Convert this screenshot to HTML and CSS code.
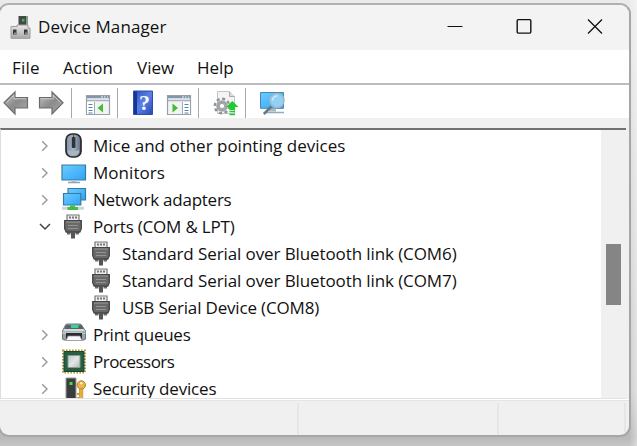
FILE: index.html
```html
<!DOCTYPE html>
<html lang="en">
<head>
<meta charset="utf-8">
<title>Device Manager</title>
<link rel="stylesheet" href="styles.css">
</head>
<body>
<svg class="defs" width="0" height="0" aria-hidden="true">
  <defs>
    <linearGradient id="sky" x1="0" y1="0" x2="1" y2="1"><stop offset="0" stop-color="#6dccff"/><stop offset="1" stop-color="#2fa3f6"/></linearGradient>
    <linearGradient id="metal" x1="0" y1="0" x2="0" y2="1"><stop offset="0" stop-color="#e8e8e8"/><stop offset="1" stop-color="#a9a9ad"/></linearGradient>
    <linearGradient id="arrow" x1="0" y1="0" x2="1" y2="1"><stop offset="0" stop-color="#c4c4c4"/><stop offset=".5" stop-color="#8b8b8b"/><stop offset="1" stop-color="#a9a9a9"/></linearGradient>
    <linearGradient id="blue" x1="0" y1="0" x2="1" y2="1"><stop offset="0" stop-color="#2750bd"/><stop offset=".5" stop-color="#5b80e5"/><stop offset="1" stop-color="#2449b8"/></linearGradient>
    <linearGradient id="body" x1="0" y1="0" x2="1" y2="0"><stop offset="0" stop-color="#8393a7"/><stop offset=".5" stop-color="#a5b3c2"/><stop offset="1" stop-color="#5c6c80"/></linearGradient>
    <linearGradient id="die" x1="0" y1="0" x2="1" y2="1"><stop offset="0" stop-color="#c3c5c6"/><stop offset=".5" stop-color="#e5e6e7"/><stop offset="1" stop-color="#b8babb"/></linearGradient>
    <symbol id="port" viewBox="0 0 18 25">
      <path d="M3 7V1h12v6" fill="#eee" stroke="#777" stroke-width="1.2"/>
      <path d="M5 2.500h2v2H5zM8 2.500h2v2H8zM11 2.500h2v2h-2z" fill="#777"/>
      <path d="M3 16h3.500v4.500H3zM11.500 16H15v4.500h-3.500z" fill="#6c6c6c"/>
      <path d="M.7 6.700h16.600v8l-1.500 3.300H2.200l-1.500-3.300z" fill="#696969" stroke="#454545" stroke-width="1.300"/>
      <path d="M2 8h14" stroke="#999"/>
      <path d="M4 11.500h10M4 14.500h10" stroke="#939393"/>
      <path d="M7 18h4v6.500H7z" fill="#555"/>
    </symbol>
    <symbol id="chevron" viewBox="0 0 8 12"><path d="M1.200 1.300 6 6l-4.800 4.700" fill="none" stroke="#999" stroke-width="1.400"/></symbol>
  </defs>
</svg>
<main class="window">
  <header class="titlebar">
    <svg class="app-icon" viewBox="10 14 22 24">
      <path d="M18.500 15h9v12h-9z" fill="#444947"/><path d="M26 15h1.500v12H26z" fill="#8c9290"/><path d="M22 18h2.500v2.500H22z" fill="#2fc83c"/>
      <path d="M11 25.500h6v-1.500h11v3h2v10.300H11z" fill="url(#metal)" stroke="#9c9c9f"/>
      <path d="M13 28.500h3.500v5H13zM24 28.500h3.500v5H24z" fill="#39393b"/>
      <path d="M14 31.500h2.500v2H14zM25 31.500h2.500v2H25z" fill="#8e8e92"/>
    </svg>
    <h1 class="title">Device Manager</h1>
    <div class="controls">
      <svg class="control" viewBox="0 0 16 16"><path d="M.5 8.500H15.500" stroke="#111" fill="none"/></svg>
      <svg class="control" viewBox="0 0 16 16"><rect x="1.200" y="1.600" width="13.600" height="13.500" rx="1" fill="none" stroke="#111" stroke-width="1.400"/></svg>
      <svg class="control" viewBox="0 0 16 16"><path d="m1 1.500 14 14M15 1.500l-14 14" stroke="#111" stroke-width="1.300" fill="none"/></svg>
    </div>
  </header>
  <nav class="menu">
    <span class="file">File</span><span class="action">Action</span><span class="view">View</span><span class="help">Help</span>
  </nav>
  <div class="toolbar">
    <svg class="tool back" viewBox="0 0 26 26"><path d="M1 12.800 12 2v5.500h12.500v10.500H12v6z" fill="url(#arrow)" stroke="#6c6c6c" stroke-width="1.200"/><path d="M3.500 12.500 10.800 5.200v3.600h12.500" fill="none" stroke="#cacaca"/></svg>
    <svg class="tool forward" viewBox="0 0 26 26"><path d="M25 12.800 14 2v5.500H1.500v10.500H14v6z" fill="url(#arrow)" stroke="#6c6c6c" stroke-width="1.200"/><path d="M2.500 8.800h12.700V5.200l7.300 7.300" fill="none" stroke="#cacaca"/></svg>
    <i class="separator"></i>
    <svg class="tool tree-tool" viewBox="0 0 26 26">
      <path d="M1.500 5.500h23v19h-23z" fill="#f2f3f3" stroke="#99a0a8" stroke-width="1.200"/><path d="M2 6h22v2.300H2z" fill="#8296ad"/><path d="M16 7h2M19 7h1.500M22 7h1" stroke="#e9eef5"/><path d="M2 10.500h22" stroke="#aab2bc" stroke-width="1.500"/>
      <path d="M2 12h7v12H2z" fill="#fff"/><path d="M9.500 12v12" stroke="#a5aab0"/><path d="M3.500 14.500h4M3.500 17.500h4M3.500 20.500h4M3.500 23h4" stroke="#4d87bd" stroke-width="1.200"/><path d="M18 13.500v9l-5.500-4.500z" fill="#45bd32"/>
    </svg>
    <i class="separator"></i>
    <svg class="tool book" viewBox="0 0 26 26"><path d="M3.500 1h19v23.500h-19z" fill="url(#blue)" stroke="#2d4fa8"/><path d="M4 1.500h3V24H4z" fill="#173695"/><text class="question" x="14.500" y="20" text-anchor="middle">?</text></svg>
    <svg class="tool run-tool" viewBox="0 0 26 26">
      <path d="M1.500 5.500h23v19h-23z" fill="#f2f3f3" stroke="#99a0a8" stroke-width="1.200"/><path d="M2 6h22v2.300H2z" fill="#8296ad"/><path d="M16 7h2M19 7h1.500M22 7h1" stroke="#e9eef5"/><path d="M2 10.500h22" stroke="#aab2bc" stroke-width="1.500"/>
      <path d="M16.500 12H24v12h-7.500z" fill="#fff"/><path d="M16.500 12v12" stroke="#a5aab0"/><path d="M18.500 14.500h4M18.500 17.500h4M18.500 20.500h4M18.500 23h4" stroke="#4d87bd" stroke-width="1.200"/><path d="M6.500 13.500v9l5.500-4.500z" fill="#45bd32"/>
    </svg>
    <i class="separator"></i>
    <svg class="tool gear" viewBox="0 0 26 26">
      <path d="M4.500 1.500h12l5 5v17h-17z" fill="#f4f4f4" stroke="#c4c4c4"/><path d="M16.500 1.500v5h5" fill="#ddd" stroke="#aaa"/>
      <circle cx="9" cy="16" r="7.200" fill="none" stroke="#8e9194" stroke-width="2.400" stroke-dasharray="3 2.650"/><circle cx="9" cy="16" r="4.300" fill="#f2f2f2" stroke="#a2a5a8" stroke-width="3"/><circle cx="9" cy="16" r="2.600" fill="#fff" stroke="#7d8083" stroke-width=".7"/>
      <path d="m19.300 11 6.200 6h-3.400v3h-5.600v-3h-3.400z" fill="#1fcb31"/><path d="M16.500 21.500H22M16.500 24.500H22" stroke="#1fcb31" stroke-width="1.700"/>
    </svg>
    <i class="separator"></i>
    <svg class="tool scan" viewBox="0 0 26 26">
      <path d="M1.500 2.500h23v15.800h-23z" fill="url(#sky)" stroke="#4388b3"/><path d="M10 18.500h7v3h-7z" fill="#aab9c3"/><path d="M6 22.500h19" stroke="#8eacbf" stroke-width="1.500"/>
      <path d="m12.500 16.500-7.700 7.500" stroke="#687780" stroke-width="2.500"/><circle cx="18" cy="10.500" r="7" fill="#91d1f4" stroke="#a3b8c4" stroke-width="1.600"/><path d="M13.500 10.500a4.500 4.500 0 0 1 5-4.500" stroke="#c8ecff" stroke-width="1.500" fill="none"/>
    </svg>
  </div>
  <section class="panel">
    <ul class="tree">
      <li class="row"><svg class="chevron"><use href="#chevron"/></svg><svg class="icon" viewBox="0 0 26 26"><rect x="5" y="1" width="15" height="23" rx="6" fill="url(#body)" stroke="#27292c" stroke-width="1.700"/><path d="M7 17q5.500 2 11 0v3q-2 2.500-5.500 2.500T7 20z" fill="#a9b6c4"/><rect x="10.800" y="4" width="3.600" height="11" rx="1" fill="#303235"/><path d="M12.600 1v3" stroke="#46494d"/></svg><span class="label mice">Mice and other pointing devices</span></li>
      <li class="row"><svg class="chevron"><use href="#chevron"/></svg><svg class="icon" viewBox="0 0 26 26"><path d="M1 5h23.500v15H1z" fill="url(#sky)" stroke="#387ba2" stroke-width="1.200"/><path d="M10.500 20.600h5v1.500h-5z" fill="#bac9d2"/><path d="M7 22.500h12" stroke="#8da2b1" stroke-width="1.400"/></svg><span class="label monitors">Monitors</span></li>
      <li class="row"><svg class="chevron"><use href="#chevron"/></svg><svg class="icon" viewBox="0 0 26 26"><path d="M7 1.500h17.500v11.300H7z" fill="url(#sky)" stroke="#387ba2" stroke-width="1.200"/><path d="M2.500 6.500h17.300V18H2.500z" fill="url(#sky)" stroke="#387ba2" stroke-width="1.200"/><path d="M1 21.300h22" stroke="#d0d4d4" stroke-width="3"/><path d="M9 18.500h5V20h3v3H6.500v-3H9z" fill="#42bd49"/></svg><span class="label network">Network adapters</span></li>
      <li class="row"><svg class="chevron open" viewBox="0 0 12 8"><path d="m1 1 5 5 5-5" fill="none" stroke="#444" stroke-width="1.500"/></svg><svg class="icon port"><use href="#port"/></svg><span class="label ports">Ports (COM &amp; LPT)</span></li>
      <li class="row child"><svg class="icon port"><use href="#port"/></svg><span class="label serial">Standard Serial over Bluetooth link (COM6)</span></li>
      <li class="row child"><svg class="icon port"><use href="#port"/></svg><span class="label serial">Standard Serial over Bluetooth link (COM7)</span></li>
      <li class="row child"><svg class="icon port"><use href="#port"/></svg><span class="label usb">USB Serial Device (COM8)</span></li>
      <li class="row"><svg class="chevron"><use href="#chevron"/></svg><svg class="icon" viewBox="0 0 26 26"><path d="m4.500 3 1-1h14l1 1 4 6v8l-1 1h-21l-1-1V9z" fill="#9aa3ab" stroke="#6d767e"/><path d="M5 3h15.500l2 4h-19z" fill="#59636b"/><path d="M10 3h8l-1 3h-7z" fill="#35d98e"/><path d="m2 9 1.500-2h19L24 9z" fill="#d5dade"/><path d="M1.500 9.500h23V12h-23z" fill="#bcc3c9"/><path d="M5 11h16v6H5z" fill="#292c2f"/><path d="M7 14h12l2 4.500H5z" fill="#f8f8f8" stroke="#8b8e91" stroke-width=".7"/><path d="M21.500 10.500h2" stroke="#35cd74"/></svg><span class="label print">Print queues</span></li>
      <li class="row"><svg class="chevron"><use href="#chevron"/></svg><svg class="icon" viewBox="0 0 26 26"><rect x="2" y="1.500" width="22" height="22" fill="none" stroke="#b99737" stroke-width="2" stroke-dasharray="1.600 1.400"/><path d="M3 2.500h20v20H3z" fill="#285e42" stroke="#19472e"/><path d="M7 6.500h12v12H7z" fill="url(#die)" stroke="#81a08e"/></svg><span class="label processors">Processors</span></li>
      <li class="row"><svg class="chevron"><use href="#chevron"/></svg><svg class="icon" viewBox="0 0 26 26"><path d="M5 2h10v25H5z" fill="#3a3c3e" stroke="#999" stroke-width="1"/><path d="M8.500 6h3v3h-3z" fill="#38e446"/><circle cx="20.300" cy="9" r="4.200" fill="#e8b64a" stroke="#b68124"/><circle cx="20.300" cy="7.300" r="1.200" fill="#fff1c8"/><path d="M18.500 13h3.300v13h-3.300z" fill="#e6ae3d" stroke="#b68124" stroke-width=".6"/><path d="M16 17h2.500v2H16zM16 21h2.500v2H16z" fill="#d09b30"/></svg><span class="label security">Security devices</span></li>
    </ul>
    <div class="scrollbar"><div class="thumb"></div></div>
  </section>
  <footer class="status"><i class="cell first"></i><i class="cell second"></i><i class="cell third"></i></footer>
</main>
</body>
</html>
```

FILE: styles.css
```css
* { box-sizing: border-box; }
body {
  margin: 0;
  width: 637px;
  height: 446px;
  overflow: hidden;
  padding-top: 3px;
  background: linear-gradient(90deg, transparent 625px, #d8d8d800 629px, #ffffff66 637px), linear-gradient(#ebebeb 0, #dedede 150px, #cdcdcd 390px, #b8b8b8 437px, #c5c5c5 446px);
  font-family: "Open Sans", "Noto Sans", sans-serif;
  font-size: 17px;
  color: #111;
}
.defs { position: absolute; }
.window {
  width: 633px;
  height: 434px;
  margin-left: -2px;
  border: 2px solid #a6a6a6;
  border-top-color: #b0b0b0;
  border-radius: 11px;
  background: #f0f0f0;
  overflow: hidden;
  display: flex;
  flex-direction: column;
}
.titlebar { height: 45px; flex: none; display: flex; align-items: center; padding-left: 10px; background: #f3f3f3; }
.app-icon { width: 22px; height: 24px; margin-top: -2px; }
.title { margin: -1px 0 0 6px; font-size: 17px; font-weight: 400; line-height: 24px; letter-spacing: .1px; white-space: nowrap; }
.controls { display: flex; gap: 53px; margin: -3px 27px 0 auto; }
.control { width: 16px; height: 16px; }
.control:last-child { margin-left: 2px; margin-right: -1px; }
.menu { height: 33px; flex: none; display: flex; background: #fff; line-height: 35px; padding-left: 12px; }
.menu span { white-space: nowrap; }
.file { width: 51px; letter-spacing: .2px; }
.action { width: 74px; }
.view { width: 60px; }
.toolbar { height: 35px; flex: none; display: flex; align-items: flex-start; padding: 5px 0 0 3px; border-top: 2px solid #bdbdc0; background: #fff; }
.tool { width: 26px; height: 26px; flex: none; }
.forward { margin-left: 9px; }
.separator { width: 1px; height: 30px; margin: -2px 0 0 6px; background: #aaa; flex: none; }
.forward + .separator { margin-left: 7px; }
.tree-tool { margin-left: 13px; }
.book { margin-left: 12px; }
.run-tool { margin-left: 10px; }
.gear { margin-left: 14px; }
.scan { margin-left: 13px; }
.question { font: 700 22px "Liberation Serif", serif; fill: #f4f7ff; }
.panel { height: 271px; margin: 10px 3px 0 0; flex: none; display: flex; border-top: 2px solid #717171; border-left: 1px solid #dedede; border-bottom: 1px solid #e2e2e2; background: #fff; overflow: hidden; }
.tree { list-style: none; margin: 0; padding: 2px 0 0; flex: 1; }
.row { height: 27px; display: flex; align-items: center; padding-left: 40px; }
.chevron { width: 8px; height: 12px; flex: none; margin-right: 12px; }
.chevron.open { width: 12px; height: 8px; margin: 0 10px 0 -2px; }
.icon { width: 26px; height: 26px; flex: none; }
.icon.port { width: 18px; height: 25px; margin: -1px 5px 0 3px; }
.child { padding-left: 88px; }
.label { white-space: nowrap; margin-left: 6px; line-height: 27px; }
.child .label { margin-left: 7px; }
.monitors { letter-spacing: .05px; }
.network { letter-spacing: -.25px; }
.ports { letter-spacing: -.2px; }
.serial { letter-spacing: -.1px; }
.usb { letter-spacing: -.17px; }
.print { letter-spacing: -.28px; }
.processors { letter-spacing: -.52px; }
.security { letter-spacing: -.18px; }
.scrollbar { width: 25px; padding: 114px 5px 0; background: #f0f0f0; }
.thumb { height: 61px; background: #858585; }
.status { flex: 1; display: flex; border-top: 1px solid #fff; box-shadow: inset 0 1px #e5e5e5; padding-top: 3px; }
.cell { border-right: 2px solid #e6e6e6; }
.first { width: 299px; }
.second { width: 200px; }
.third { width: 127px; }
```
